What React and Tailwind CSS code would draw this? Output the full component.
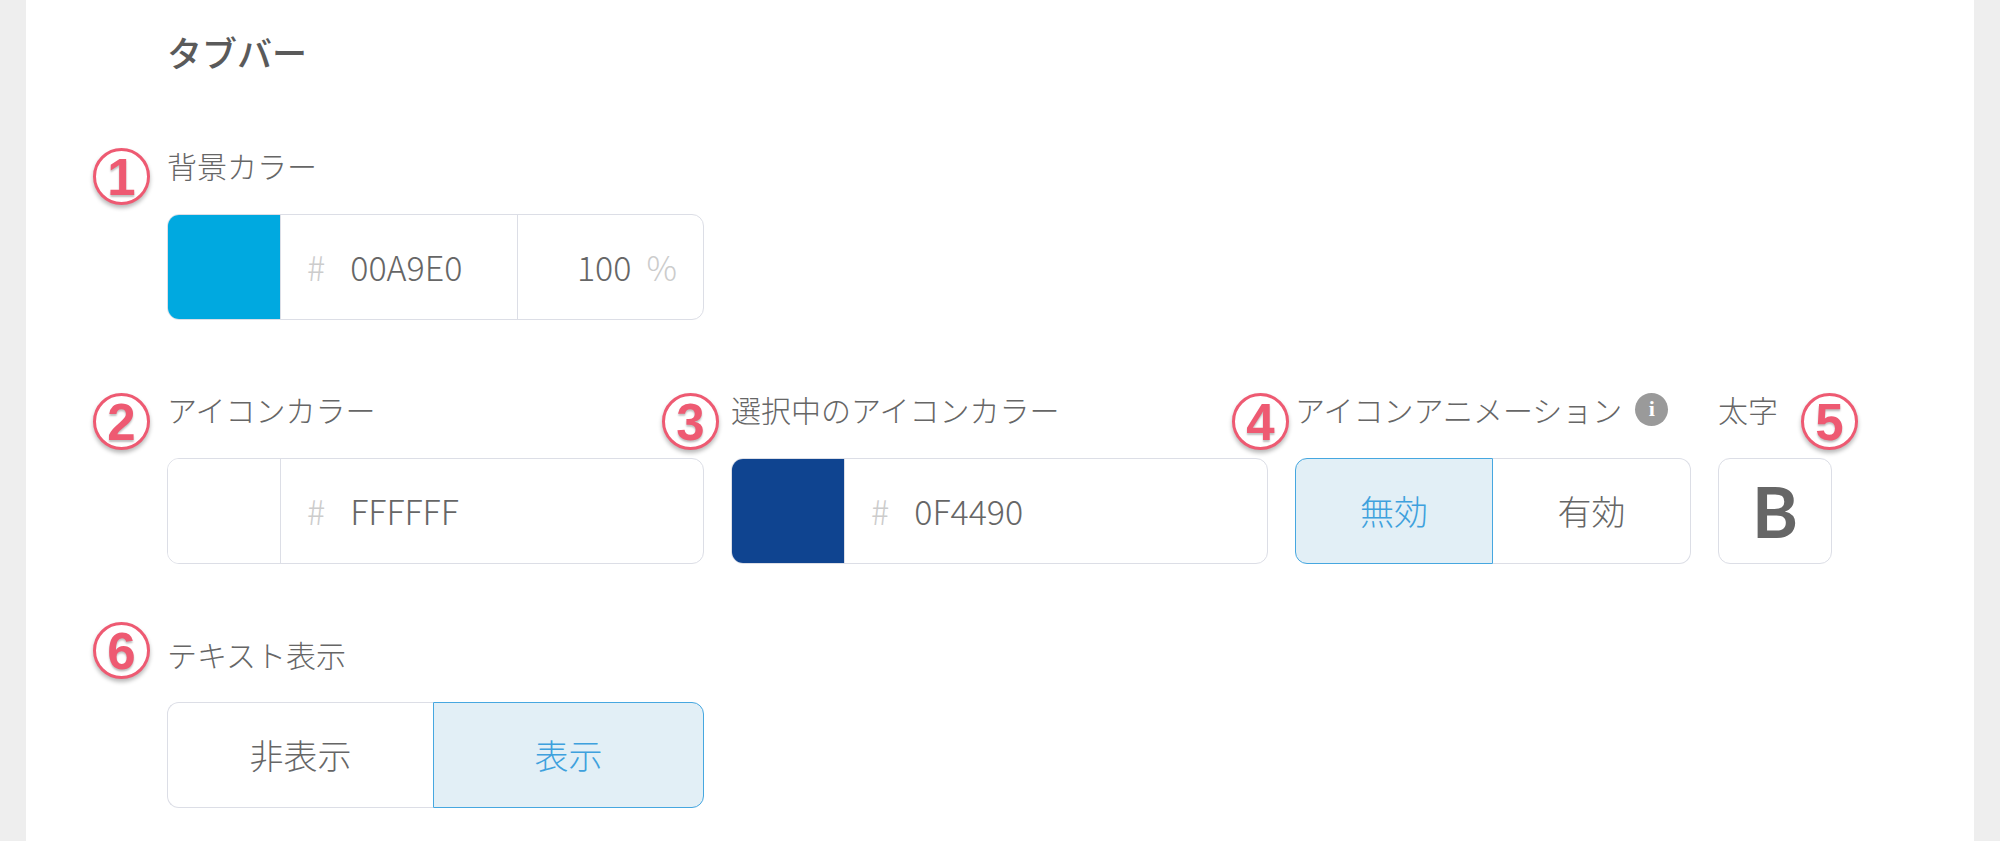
import React from 'react'

const jp = { fontFamily: '"Noto Sans CJK JP", "Noto Sans", sans-serif' }

const Badge = ({ n, className }) => (
  <div
    className={`absolute w-[57px] h-[57px] rounded-full bg-white border-[3px] border-[#ee5a72] shadow-[0_3px_4px_rgba(0,0,0,0.28)] flex items-center justify-center ${className}`}
  >
    <span
      className="text-[51px] leading-none font-bold text-[#ee5a72] [text-shadow:0_2px_2px_rgba(0,0,0,0.25)] mt-[2px]"
      style={{ fontFamily: '"Liberation Sans", Arial, sans-serif' }}
    >
      {n}
    </span>
  </div>
)

const Label = ({ children }) => (
  <div className="text-[30px] leading-[36px] font-light text-[#666666] flex items-center whitespace-nowrap">
    {children}
  </div>
)

const ColorInput = ({ color, hex, alpha, width = 'w-[537px]' }) => (
  <div className={`mt-[31px] ${width} h-[106px] flex border border-[#dcdee6] rounded-[12px] overflow-hidden bg-white`}>
    <div className="w-[113px] shrink-0 border-r border-[#dcdee6]" style={{ backgroundColor: color }} />
    <div className="flex-1 flex items-center pl-[26px] text-[34px] leading-none font-light">
      <span className="text-[#cccccc]">#</span>
      <span className="ml-[25px] text-[#666666]">{hex}</span>
    </div>
    {alpha && (
      <div className="w-[186px] shrink-0 border-l border-[#dcdee6] flex items-center justify-end pr-[26px] text-[34px] leading-none font-light">
        <span className="text-[#666666]">{alpha}</span>
        <span className="ml-[15px] text-[#cccccc]">%</span>
      </div>
    )}
  </div>
)

const Seg = ({ active, side, className, children }) => {
  const base = 'h-[106px] flex items-center justify-center text-[34px] leading-none font-light'
  const round = side === 'l' ? 'rounded-l-[12px]' : 'rounded-r-[12px]'
  if (active) {
    return (
      <div className={`${base} ${round} ${className} bg-[#e2eff6] border border-[#46a7e0] text-[#3ea1dd]`}>
        {children}
      </div>
    )
  }
  const borders = side === 'l' ? 'border-y border-l' : 'border-y border-r'
  return (
    <div className={`${base} ${round} ${className} bg-white ${borders} border-[#dcdee6] text-[#666666]`}>
      {children}
    </div>
  )
}

const App = () => {
  return (
    <div className="min-h-[841px] bg-[#eeeeee] px-[26px]" style={jp}>
      <div className="min-h-[841px] bg-white pl-[141px] pt-[31px]">
        <h2 className="text-[35px] leading-[42px] font-medium text-[#5a5a5a]">タブバー</h2>

        {/* 背景 */}
        <div className="relative mt-[74px] w-[537px]">
          <Badge n="1" className="-left-[74px] top-[1px]" />
          <Label>背景カラー</Label>
          <ColorInput color="#00A9E0" hex="00A9E0" alpha="100" />
        </div>

        {/* icons */}
        <div className="mt-[71px] flex items-start gap-[27px]">
          <div className="relative w-[537px]">
            <Badge n="2" className="-left-[74px] top-[2px]" />
            <Label>アイコンカラー</Label>
            <ColorInput color="#ffffff" hex="FFFFFF" />
          </div>
          <div className="relative w-[537px]">
            <Badge n="3" className="-left-[69px] top-[2px]" />
            <Label>選択中のアイコンカラー</Label>
            <ColorInput color="#0F4490" hex="0F4490" />
          </div>
          <div className="relative w-[396px]">
            <Badge n="4" className="-left-[63px] top-[2px]" />
            <Label>
              アイコンアニメーション
              <span className="ml-[13px] w-[33px] h-[33px] rounded-full bg-[#9a9a9a] flex items-center justify-center text-white text-[22px] font-bold leading-none" style={{ fontFamily: '"Liberation Serif", serif' }}>
                i
              </span>
            </Label>
            <div className="mt-[31px] flex">
              <Seg active side="l" className="w-[198px]">無効</Seg>
              <Seg side="r" className="w-[198px]">有効</Seg>
            </div>
          </div>
          <div className="relative w-[114px]">
            <Badge n="5" className="left-[83px] top-[2px]" />
            <Label>太字</Label>
            <div className="mt-[31px] h-[106px] border border-[#dcdee6] rounded-[12px] flex items-center justify-center">
              <span className="text-[70px] leading-none font-bold text-[#666666]" style={{ fontFamily: 'Lato, sans-serif' }}>B</span>
            </div>
          </div>
        </div>

        {/* text */}
        <div className="relative mt-[72px] w-[537px]">
          <Badge n="6" className="-left-[74px] -top-[14px]" />
          <Label>テキスト表示</Label>
          <div className="mt-[30px] flex">
            <Seg side="l" className="w-[266px]">非表示</Seg>
            <Seg active side="r" className="w-[271px]">表示</Seg>
          </div>
        </div>
      </div>
    </div>
  )
}

export default App
